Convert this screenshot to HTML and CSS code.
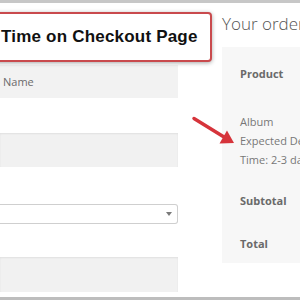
FILE: index.html
```html
<!DOCTYPE html>
<html>
  <head>
    <meta charset="UTF-8" />
    <link rel="stylesheet" href="styles.css">
  </head>
  <body>
    <div class="edge"></div>

    <div class="checkout">
      <div class="billing">
        <div class="field filled">Name</div>
        <div class="field"></div>
        <div class="select">
          <span class="caret"></span>
        </div>
        <div class="field last"></div>
      </div>

      <div class="order">
        <h2>Your order</h2>
        <div class="order-table">
          <div class="row head">Product</div>
          <div class="row item">
            <div>Album</div>
            <div>Expected Delivery</div>
            <div>Time: 2-3 days</div>
          </div>
          <div class="row subtotal">Subtotal</div>
          <div class="row total">Total</div>
        </div>
      </div>
    </div>

    <div class="edge bottom"></div>

    <!-- annotation layered over the screenshot -->
    <div class="callout">Time on Checkout Page</div>
    <svg class="pointer" width="50" height="36" viewBox="190 112 50 36">
      <line x1="194" y1="118.5" x2="224" y2="137" stroke="#d6343b" stroke-width="3.5" stroke-linecap="round" />
      <polygon points="234,143 219.5,143.5 227,130.5" fill="#d6343b" />
    </svg>
  </body>
</html>
```

FILE: styles.css
```css
body {
  margin: 0;
  width: 300px;
  height: 300px;
  overflow: hidden;
  position: relative;
  background: white;
  font-family: "Open Sans", "Liberation Sans", sans-serif;
  display: flex;
  flex-direction: column;
}
.edge {
  height: 3px;
  background: #c7c7c7;
  flex-shrink: 0;
}
.edge.bottom {
  background: #bdbdbd;
}
.checkout {
  flex-grow: 1;
  display: grid;
  grid-template-columns: 178px 1fr;
  column-gap: 44px;
  min-height: 0;
}
.billing {
  display: flex;
  flex-direction: column;
  padding-top: 62px;
}
.field {
  height: 34px;
  background: #f1f1f1;
  box-shadow: inset 0 1px 2px rgba(0, 0, 0, 0.07);
  margin-bottom: 35px;
  font-size: 11px;
  color: #6b6b6b;
  display: flex;
  align-items: center;
  padding-left: 3px;
}
.field.filled {
  height: 33px;
  background: #f2f2f2;
  box-shadow: none;
}
.field.last {
  height: 35px;
  margin-bottom: 0;
}
.select {
  height: 20px;
  box-sizing: border-box;
  border: 1px solid #cfcfcf;
  border-left: none;
  border-radius: 0 3px 3px 0;
  margin-top: 2px;
  margin-bottom: 33px;
  display: flex;
  align-items: center;
  justify-content: flex-end;
  padding-right: 5px;
}
.caret {
  width: 0;
  height: 0;
  border-left: 3px solid transparent;
  border-right: 3px solid transparent;
  border-top: 4px solid #7a7a7a;
}
.order h2 {
  margin: 0;
  padding-top: 9px;
  font-size: 17px;
  line-height: 23px;
  font-weight: 300;
  color: #555;
  white-space: nowrap;
}
.order-table {
  margin-top: 12px;
  background: #f7f7f7;
  padding-left: 18px;
  font-size: 11px;
  color: #777;
  white-space: nowrap;
  overflow: hidden;
}
.row {
  line-height: 16px;
}
.row.head {
  padding: 19px 0 15px;
  font-weight: 700;
  color: #6a6a6a;
}
.row.item {
  line-height: 19px;
  padding: 15px 0 12px;
}
.row.subtotal {
  padding: 12px 0 13px;
  font-weight: 700;
  color: #6a6a6a;
}
.row.total {
  padding: 14px 0 11px;
  font-weight: 700;
  color: #6a6a6a;
}
.callout {
  position: absolute;
  left: -10px;
  top: 12px;
  width: 222px;
  height: 50px;
  box-sizing: border-box;
  border: 2px solid #c94a4d;
  border-radius: 4px;
  background: white;
  box-shadow: 0 1px 4px rgba(0, 0, 0, 0.35);
  font-family: "Liberation Sans", Arial, sans-serif;
  font-weight: 700;
  font-size: 17px;
  letter-spacing: 0.2px;
  color: #111;
  display: flex;
  align-items: center;
  padding-left: 9px;
  white-space: nowrap;
}
.pointer {
  position: absolute;
  left: 190px;
  top: 112px;
}
```
